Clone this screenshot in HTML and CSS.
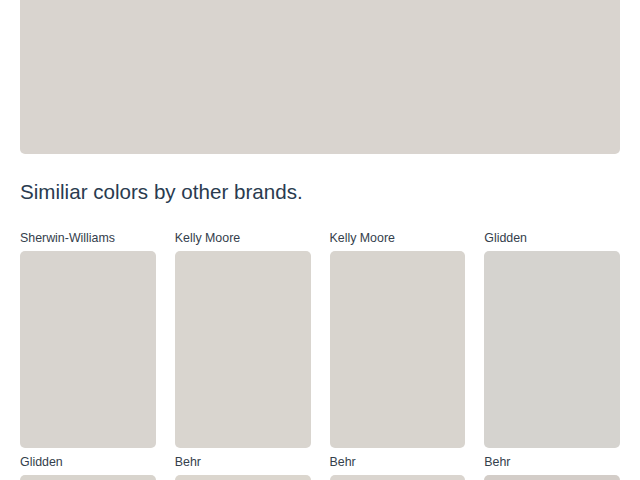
FILE: index.html
```html
<!DOCTYPE html>
<html>
<head>
<meta charset="utf-8">
<title>Similar colors</title>
<link rel="stylesheet" href="styles.css">
</head>
<body>

<div class="page">
	<div class="swatch-main"></div>

	<h2 class="similar-title">Similiar colors by other brands.</h2>

	<div class="brand-grid">
		<div class="brand">
			<div class="brand-name">Sherwin-Williams</div>
			<div class="chip" style="background:#d8d4cf"></div>
		</div>
		<div class="brand">
			<div class="brand-name">Kelly Moore</div>
			<div class="chip" style="background:#d9d5cf"></div>
		</div>
		<div class="brand">
			<div class="brand-name">Kelly Moore</div>
			<div class="chip" style="background:#d8d4ce"></div>
		</div>
		<div class="brand">
			<div class="brand-name">Glidden</div>
			<div class="chip" style="background:#d5d3cf"></div>
		</div>

		<div class="brand">
			<div class="brand-name">Glidden</div>
			<div class="chip" style="background:#d8d4cd"></div>
		</div>
		<div class="brand">
			<div class="brand-name">Behr</div>
			<div class="chip" style="background:#dbd6ce"></div>
		</div>
		<div class="brand">
			<div class="brand-name">Behr</div>
			<div class="chip" style="background:#dad5cf"></div>
		</div>
		<div class="brand">
			<div class="brand-name">Behr</div>
			<div class="chip" style="background:#d3cdc8"></div>
		</div>
	</div>
</div>

</body>
</html>
```

FILE: styles.css
```css
body {
	margin: 0;
	background: #FFFFFF;
	font-family: 'Liberation Sans', Arial, sans-serif;
	overflow: hidden;
}
.page {
	margin: 0 20px;
}
.swatch-main {
	height: 154px;
	background: #d9d4cf;
	border-radius: 0 0 5px 5px;
}
.similar-title {
	margin: 26px 0 25px 0;
	font-size: 20.6px;
	line-height: 24px;
	font-weight: normal;
	color: #2a3b4f;
}
.brand-grid {
	display: grid;
	grid-template-columns: repeat(4, 1fr);
	column-gap: 19px;
}
.brand-name {
	font-size: 12.4px;
	line-height: 18px;
	color: #34404c;
	margin-bottom: 4px;
}
.chip {
	height: 197px;
	border-radius: 5px;
	margin-bottom: 5px;
}
```
